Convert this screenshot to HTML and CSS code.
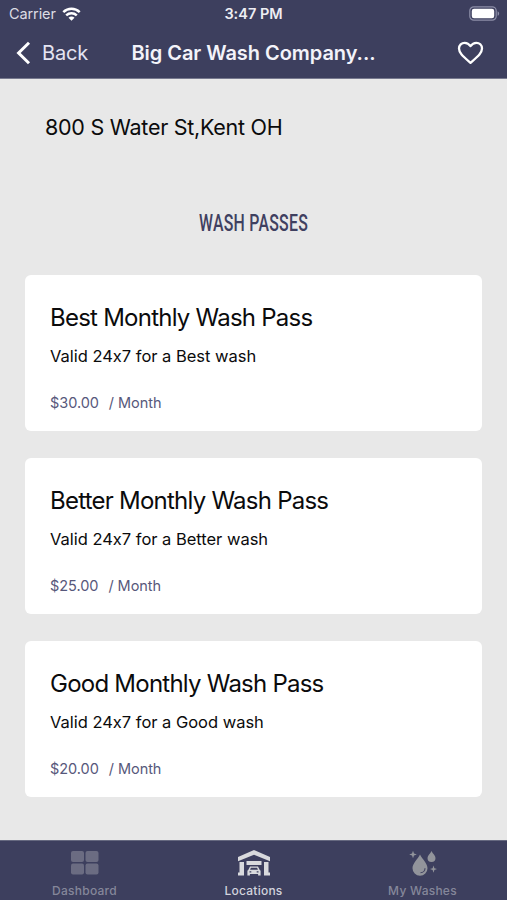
FILE: index.html
```html
<!DOCTYPE html>
<html lang="en">

<head>
	<meta charset="utf-8">
	<title>Big Car Wash Company</title>
	<link rel="stylesheet" href="styles.css">
</head>

<body>
	<div class="app">
		<header class="header">
			<div class="status-bar">
				<div class="carrier">
					<span>Carrier</span>
					<svg class="wifi" width="19" height="14" viewBox="0 0 19 14">
						<path d="M1.3 5.2C6 .7 13 .7 17.7 5.2M4.2 8.3c3-2.8 7.6-2.8 10.6 0" fill="none" stroke="#fff" stroke-width="2.5"/>
						<path d="M6.5 10.7c1.8-1.5 4.2-1.5 6 0l-3 3z" fill="#fff"/>
					</svg>
				</div>
				<span class="time">3:47 PM</span>
				<svg class="battery" width="31" height="15" viewBox="0 0 31 15">
					<rect x=".8" y=".8" width="26.4" height="13.4" rx="4" fill="none" stroke="#8d8fa8" stroke-width="1.2"/>
					<rect x="2.8" y="2.8" width="22.4" height="9.4" rx="2.2" fill="#fff"/>
					<path d="M28.6 5.2c2 .8 2 3.8 0 4.6z" fill="#8d8fa8"/>
				</svg>
			</div>
			<nav class="nav-bar">
				<a class="back">
					<svg width="16" height="24" viewBox="0 0 16 24">
						<path d="M13 1.8L2.6 12 13 22.2" fill="none" stroke="#fff" stroke-width="3"/>
					</svg>
					<span>Back</span>
				</a>
				<h1>Big Car Wash Company...</h1>
				<svg class="heart" width="27" height="24" viewBox="0 0 27 24">
					<path d="M13.5 21.8C6 15.2 2 12 2 7.6 2 4.2 4.6 1.8 7.7 1.8c2.4 0 4.4 1.3 5.8 3.3 1.4-2 3.4-3.3 5.8-3.3C22.4 1.8 25 4.2 25 7.6c0 4.400-4 7.600-11.500 14.200z" fill="none" stroke="#fff" stroke-width="2.3" stroke-linejoin="round"/>
				</svg>
			</nav>
		</header>

		<main class="content">
			<p class="address">800 S Water St,Kent OH</p>
			<h2><span>WASH PASSES</span></h2>
			<div class="card">
				<h3>Best Monthly Wash Pass</h3>
				<p class="description">Valid 24x7 for a Best wash</p>
				<p class="price"><span>$30.00</span><span>/ Month</span></p>
			</div>
			<div class="card">
				<h3>Better Monthly Wash Pass</h3>
				<p class="description">Valid 24x7 for a Better wash</p>
				<p class="price"><span>$25.00</span><span>/ Month</span></p>
			</div>
			<div class="card">
				<h3>Good Monthly Wash Pass</h3>
				<p class="description">Valid 24x7 for a Good wash</p>
				<p class="price"><span>$20.00</span><span>/ Month</span></p>
			</div>
		</main>

		<footer class="tab-bar">
			<a class="tab">
				<svg width="28" height="26" viewBox="0 0 28 26" fill="#6b6c82">
					<rect x="0" y="1" width="13" height="11" rx="2"/>
					<rect x="14.5" y="1" width="13" height="11" rx="2"/>
					<rect x="0" y="13.5" width="13" height="11" rx="2"/>
					<rect x="14.5" y="13.5" width="13" height="11" rx="2"/>
				</svg>
				<span>Dashboard</span>
			</a>
			<a class="tab active">
				<svg width="34" height="26" viewBox="0 0 34 26" fill="#d9dadd">
					<path d="M17 0L33 7v4.300L17 4.700 1 11.300V7z"/>
					<path d="M2.500 12h4.500V25.500H1v-3h1.500zM27 12h4.500v10.500H33v3h-6zM9.500 11h15v4h-15z"/>
					<path fill-rule="evenodd" d="M13 16.500h8l1.600 3.300 1 1v4.700h-2.500V24h-8.200v1.500h-2.500v-4.700l1-1zm.9 1.300l-.8 2h7.800l-.8-2zM12.500 21.300v1.200h1.800v-1.200zm7.200 0v1.200h1.800v-1.200z"/>
				</svg>
				<span>Locations</span>
			</a>
			<a class="tab">
				<svg width="28" height="26" viewBox="0 0 28 26" fill="#92949b">
					<path d="M11 4.500C8.800 9 3.500 13.600 3.500 18.300a7.500 7.500 0 0 0 15 0C18.500 13.600 13.200 9 11 4.500z"/>
					<path d="M22.500 1c-1.200 2.700-4 4.500-4 7a4 4 0 0 0 8 0c0-2.500-2.800-4.300-4-7z"/>
					<path d="M4 .8l1 2.700 2.800 1-2.800 1-1 2.800-1-2.800-2.800-1 2.800-1zM24.500 15.500l.9 2.700 2.600.9-2.600.9-.9 2.700-.9-2.700-2.600-.9 2.600-.9z"/>
					<path d="M16 18.200a4.500 4.500 0 0 1-4.500 4.500" fill="none" stroke="#3d3f5e" stroke-width="1.100"/>
				</svg>
				<span>My Washes</span>
			</a>
		</footer>
	</div>
</body>

</html>
```

FILE: styles.css
```css
* {
	box-sizing: border-box;
}

body {
	margin: 0;
	font-family: Inter, "Liberation Sans", sans-serif;
	font-feature-settings: "calt" 0;
	background-color: #e8e8e8;
	color: #0b0b0c;
}

h1,
h2,
h3,
p {
	margin: 0;
	white-space: nowrap;
}

svg {
	display: block;
	flex-shrink: 0;
}

.app {
	display: flex;
	flex-direction: column;
	height: 900px;
	overflow: hidden;
}

.header {
	height: 79px;
	background-color: #3d3f5e;
	border-bottom: 1px solid #77798e;
	color: #fff;
}

.status-bar {
	display: grid;
	grid-template-columns: 1fr auto 1fr;
	align-items: center;
	height: 27px;
	padding: 0 7px 0 9px;
}

.carrier {
	display: flex;
	align-items: center;
	gap: 6px;
	font-size: 14.5px;
	letter-spacing: -0.1px;
	color: #dcdce4;
}

.time {
	margin-right: 2px;
	font-size: 14.5px;
	font-weight: 600;
	color: #ededf3;
}

.battery {
	justify-self: end;
}

.nav-bar {
	display: grid;
	grid-template-columns: 1fr auto 1fr;
	align-items: center;
	height: 51px;
	padding: 0 23px 0 16px;
}

.back {
	display: flex;
	align-items: center;
	gap: 10px;
	font-size: 20px;
	letter-spacing: -0.2px;
	color: #e4e4f2;
}

h1 {
	margin-left: 7px;
	font-size: 20px;
	font-weight: 600;
	letter-spacing: -0.05px;
	color: #f3f3fa;
}

.heart {
	justify-self: end;
}

.content {
	flex: 1;
	padding: 0 25px;
}

.address {
	padding: 34px 20px 0;
	font-size: 21.5px;
	line-height: 28px;
	letter-spacing: -0.27px;
}

h2 {
	margin: 67px 0 38px;
	font-family: Roboto, sans-serif;
	font-size: 24px;
	font-weight: 500;
	line-height: 30px;
	text-align: center;
	color: #3f4060;
}

/* narrow the letters for the condensed heading */
h2 span {
	display: inline-block;
	letter-spacing: 0.4px;
	transform: scaleX(0.66);
}

.card {
	height: 156px;
	margin-bottom: 27px;
	padding: 27px 25px 0;
	background-color: #fff;
	border-radius: 6px;
}

h2 + .card {
	margin-top: -1px;
}

h3 {
	font-size: 24px;
	font-weight: 400;
	line-height: 32px;
	letter-spacing: -0.76px;
}

.description {
	margin-top: 10px;
	font-size: 16.5px;
	line-height: 24px;
	letter-spacing: -0.02px;
}

.price {
	display: flex;
	gap: 10px;
	margin-top: 25px;
	font-size: 14.5px;
	line-height: 20px;
	letter-spacing: -0.05px;
	color: #57587b;
}

.tab-bar {
	display: grid;
	grid-template-columns: repeat(3, 1fr);
	height: 60px;
	background-color: #3d3f5e;
	border-top: 1px solid #666980;
}

.tab {
	display: flex;
	flex-direction: column;
	align-items: center;
	padding-top: 9px;
	font-size: 12px;
	font-weight: 500;
	letter-spacing: 0.25px;
	color: #85879a;
}

.tab span {
	margin-top: 7px;
	line-height: 16px;
}

.tab.active {
	color: #d2d3dd;
}
```
